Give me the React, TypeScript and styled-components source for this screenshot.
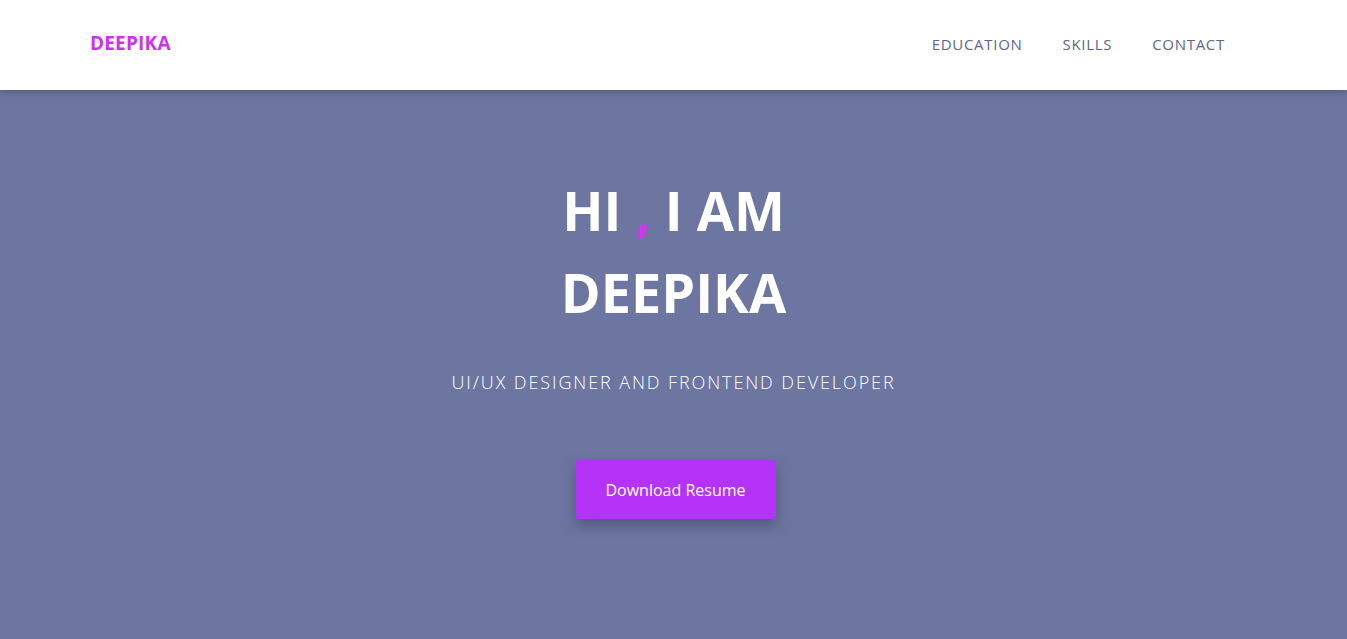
import React from "react";
import styled, { createGlobalStyle } from "styled-components";

const Global = createGlobalStyle`
  html, body { margin: 0; padding: 0; }
  body { font-family: "Open Sans", "Liberation Sans", sans-serif; overflow: hidden; }
  * { box-sizing: border-box; }
`;

const Header = styled.header`
  height: 90px;
  background: #ffffff;
  display: flex;
  align-items: center;
  justify-content: space-between;
  padding: 0 122px 0 90px;
  position: relative;
  z-index: 2;
  box-shadow: 0 2px 8px rgba(40, 40, 70, 0.35);
`;

const Logo = styled.a`
  font-size: 19px;
  font-weight: 700;
  color: #cc33ee;
  text-decoration: none;
  margin-top: -4px;
  letter-spacing: 0.2px;
`;

const Nav = styled.nav`
  display: flex;
  gap: 40px;
  margin-top: -3px;
`;

const NavLink = styled.a`
  font-size: 15px;
  color: #5e6690;
  text-decoration: none;
  letter-spacing: 0.7px;
`;

const Hero = styled.section`
  height: 549px;
  background: #6c76a0;
  display: flex;
  flex-direction: column;
  align-items: center;
  padding-top: 79px;
`;

const Title = styled.h1`
  margin: 0;
  font-size: 54px;
  line-height: 82px;
  font-weight: 700;
  color: #ffffff;
  text-align: center;
`;

const Accent = styled.span`
  color: #d633f0;
`;

const Subtitle = styled.p`
  margin: 37px 0 0;
  font-size: 18px;
  font-weight: 300;
  color: #ffffff;
  letter-spacing: 1.9px;
`;

const Button = styled.button`
  margin-top: 66px;
  width: 200px;
  height: 59px;
  border: none;
  border-radius: 3px;
  background: #b533f9;
  color: #ffffff;
  font-family: inherit;
  font-size: 16px;
  box-shadow: 0 6px 14px rgba(40, 40, 70, 0.4);
  cursor: pointer;
  transform: translateX(2px);
`;

export default function App() {
  return (
    <>
      <Global />
      <Header>
        <Logo href="#">DEEPIKA</Logo>
        <Nav>
          <NavLink href="#">EDUCATION</NavLink>
          <NavLink href="#">SKILLS</NavLink>
          <NavLink href="#">CONTACT</NavLink>
        </Nav>
      </Header>
      <Hero>
        <Title>
          HI <Accent>,</Accent> I AM
          <br />
          DEEPIKA
        </Title>
        <Subtitle>UI/UX DESIGNER AND FRONTEND DEVELOPER</Subtitle>
        <Button>Download Resume</Button>
      </Hero>
    </>
  );
}
